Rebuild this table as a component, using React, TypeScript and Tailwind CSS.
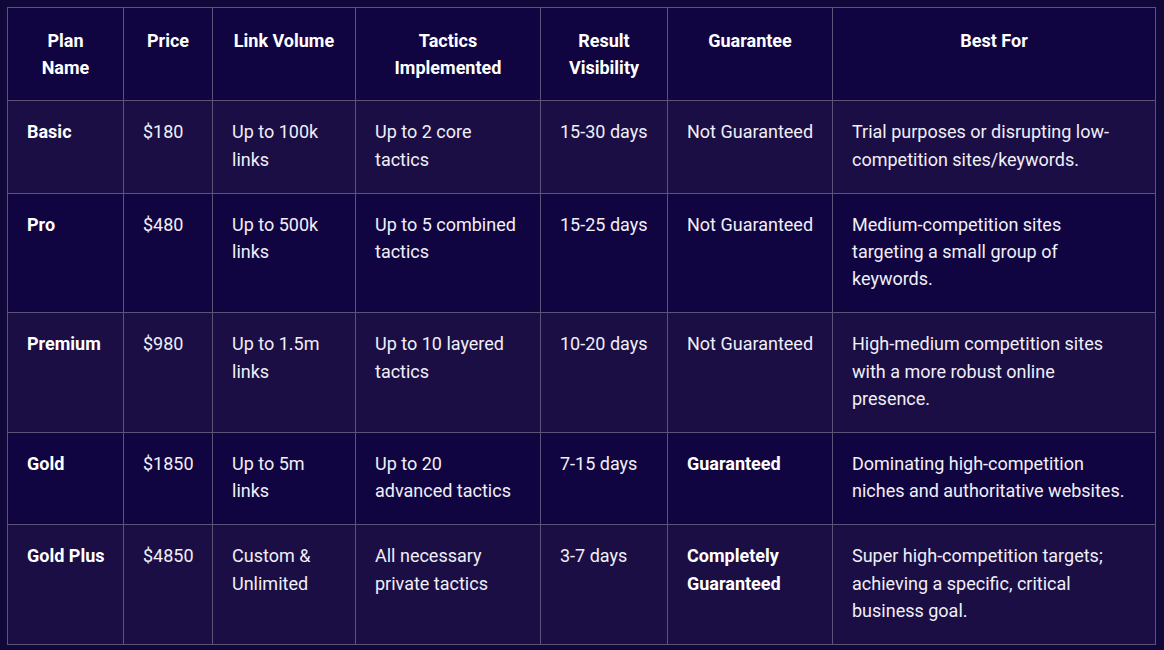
const headers = [
  "Plan Name",
  "Price",
  "Link Volume",
  "Tactics Implemented",
  "Result Visibility",
  "Guarantee",
  "Best For",
];

const widths = ["w-[116px]", "w-[89px]", "w-[143px]", "w-[185px]", "w-[127px]", "w-[165px]", "w-auto"];

const rows = [
  {
    plan: "Basic",
    price: "$180",
    volume: "Up to 100k links",
    tactics: "Up to 2 core tactics",
    visibility: "15-30 days",
    guarantee: "Not Guaranteed",
    strong: false,
    best: "Trial purposes or disrupting low-competition sites/keywords.",
  },
  {
    plan: "Pro",
    price: "$480",
    volume: "Up to 500k links",
    tactics: "Up to 5 combined tactics",
    visibility: "15-25 days",
    guarantee: "Not Guaranteed",
    strong: false,
    best: "Medium-competition sites targeting a small group of keywords.",
  },
  {
    plan: "Premium",
    price: "$980",
    volume: "Up to 1.5m links",
    tactics: "Up to 10 layered tactics",
    visibility: "10-20 days",
    guarantee: "Not Guaranteed",
    strong: false,
    best: "High-medium competition sites with a more robust online presence.",
  },
  {
    plan: "Gold",
    price: "$1850",
    volume: "Up to 5m links",
    tactics: "Up to 20 advanced tactics",
    visibility: "7-15 days",
    guarantee: "Guaranteed",
    strong: true,
    best: "Dominating high-competition niches and authoritative websites.",
  },
  {
    plan: "Gold Plus",
    price: "$4850",
    volume: "Custom & Unlimited",
    tactics: "All necessary private tactics",
    visibility: "3-7 days",
    guarantee: "Completely Guaranteed",
    strong: true,
    best: "Super high-competition targets; achieving a specific, critical business goal.",
  },
];

const cell = "border border-[#5b5478] pl-[19px] pr-[17px] pt-[17px] pb-[20px] align-top";

export default function App() {
  return (
    <div className="min-h-[650px] bg-[#100839] p-[7px] font-['Roboto',sans-serif] text-[18px] leading-[27.2px] text-[#f1eff7]">
      <table className="w-[1149px] table-fixed border-collapse">
        <colgroup>
          {widths.map((w, i) => (
            <col key={i} className={w} />
          ))}
        </colgroup>
        <thead>
          <tr className="bg-[#110541]">
            {headers.map((h) => (
              <th
                key={h}
                className="border border-[#5b5478] px-[18px] pt-[19px] pb-[19px] align-top text-center font-bold text-white"
              >
                {h}
              </th>
            ))}
          </tr>
        </thead>
        <tbody>
          {rows.map((r, i) => (
            <tr key={r.plan} className={i % 2 === 0 ? "bg-[#1a0e44]" : "bg-[#110541]"}>
              <td className={`${cell} font-bold text-white`}>{r.plan}</td>
              <td className={cell}>{r.price}</td>
              <td className={cell}>{r.volume}</td>
              <td className={cell}>{r.tactics}</td>
              <td className={cell}>{r.visibility}</td>
              <td className={`${cell} ${r.strong ? "font-bold text-white" : ""}`}>{r.guarantee}</td>
              <td className={`${cell} pr-[24px]`}>{r.best}</td>
            </tr>
          ))}
        </tbody>
      </table>
    </div>
  );
}
